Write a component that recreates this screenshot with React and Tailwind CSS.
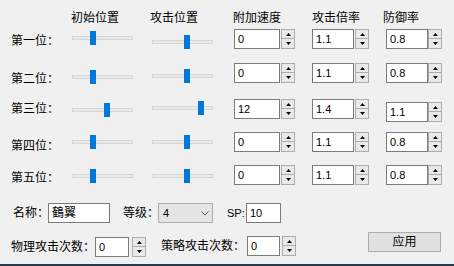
import React from 'react';

const rows = [
  { label: '第一位：', h: 'h-[34px]', lt: 'mt-[4px]', s1: 'mt-[2px]', s2: 'mt-[6px]', c3: 'mt-0', a: 18, b: 32, v: ['0', '1.1', '0.8'] },
  { label: '第二位：', h: 'h-[36px]', lt: 'mt-[8px]', s1: 'mt-[7px]', s2: 'mt-[6px]', c3: 'mt-0', a: 18, b: 32, v: ['0', '1.1', '0.8'] },
  { label: '第三位：', h: 'h-[33px]', lt: 'mt-[2px]', s1: 'mt-[4px]', s2: 'mt-[2px]', c3: 'mt-[3px]', a: 32, b: 46, v: ['12', '1.4', '1.1'] },
  { label: '第四位：', h: 'h-[33px]', lt: 'mt-[6px]', s1: 'mt-[3px]', s2: 'mt-[3px]', c3: 'mt-0', a: 18, b: 32, v: ['0', '1.1', '0.8'] },
  { label: '第五位：', h: 'h-[38px]', lt: 'mt-[5px]', s1: 'mt-[4px]', s2: 'mt-[4px]', c3: 'mt-0', a: 18, b: 32, v: ['0', '1.1', '0.8'] },
];

function Slider({ pos, className }) {
  return (
    <div className={`relative w-[61px] h-[14px] ${className}`}>
      <div className="mt-[5px] h-[4px] border border-[#d6d6d6] bg-[#e7eaea]" />
      <div className="absolute top-0 w-[6px] h-[14px] bg-[#0078d7]" style={{ left: pos }} />
    </div>
  );
}

function Arrows({ gap = 'ml-px' }) {
  return (
    <div className={`flex flex-col w-[14px] h-[20px] ${gap}`}>
      <div className="h-[10px] border border-[#adadad] bg-[#e9e9e9] flex items-center justify-center">
        <svg width="5" height="3" viewBox="0 0 5 3"><polygon points="2.5,0 5,3 0,3" fill="#000" /></svg>
      </div>
      <div className="h-[10px] border border-t-0 border-[#adadad] bg-[#e9e9e9] flex items-center justify-center">
        <svg width="5" height="3" viewBox="0 0 5 3"><polygon points="0,0 5,0 2.5,3" fill="#000" /></svg>
      </div>
    </div>
  );
}

function Spin({ value, w, gap, className = '' }) {
  return (
    <div className={`flex ${className}`}>
      <div className={`${w} h-[20px] bg-white border border-[#7a7a7a] pl-[3px] flex items-center text-[11px]`}>
        {value}
      </div>
      <Arrows gap={gap} />
    </div>
  );
}

const cols = 'grid grid-cols-[61px_80px_82px_78px_74px_68px] pl-[11px]';

export default function App() {
  return (
    <div className="w-[454px] h-[266px] bg-[#f0f0f0] flex flex-col text-[12px] leading-4 text-black whitespace-nowrap font-['Liberation_Sans','Noto_Sans_CJK_SC',sans-serif]">
      {/* Headers */}
      <div className={`${cols} h-[29px] pt-[10px]`}>
        <div />
        <div className="-ml-px">初始位置</div>
        <div className="-ml-[2px]">攻击位置</div>
        <div className="-ml-px">附加速度</div>
        <div>攻击倍率</div>
        <div className="-ml-[3px]">防御率</div>
      </div>

      {/* Position rows */}
      {rows.map((r) => (
        <div key={r.label} className={`${cols} ${r.h} items-start`}>
          <div className={r.lt}>{r.label}</div>
          <Slider pos={r.a} className={r.s1} />
          <Slider pos={r.b} className={r.s2} />
          <Spin value={r.v[0]} w="w-[46px]" />
          <Spin value={r.v[1]} w="w-[42px]" />
          <Spin value={r.v[2]} w="w-[42px]" gap="ml-0" className={r.c3} />
        </div>
      ))}

      {/* Name / level / SP */}
      <div className="flex items-center h-[20px] pl-[13px]">
        <span className="w-[35px] shrink-0">名称：</span>
        <div className="w-[62px] h-[20px] bg-white border border-[#7a7a7a] pl-[3px] flex items-center">鶴翼</div>
        <span className="ml-[13px] w-[35px] shrink-0">等级：</span>
        <div className="w-[55px] h-[20px] bg-[#e5e5e5] border border-[#adadad] pl-[4px] pr-[3px] flex items-center justify-between text-[11px]">
          <span>4</span>
          <svg width="8" height="5" viewBox="0 0 8 5" fill="none">
            <polyline points="0.5,0.5 4,4 7.5,0.5" stroke="#555" strokeWidth="1" />
          </svg>
        </div>
        <span className="ml-[14px] w-[19px] text-[11px]">SP:</span>
        <div className="w-[35px] h-[20px] bg-white border border-[#7a7a7a] pl-[3px] flex items-center text-[11px]">10</div>
      </div>

      {/* Attack counts + apply */}
      <div className="flex items-start mt-[9px] pl-[11px]">
        <div className="flex items-center mt-[5px]">
          <span className="w-[84px] shrink-0">物理攻击次数：</span>
          <Spin value="0" w="w-[34px]" gap="ml-[3px]" />
        </div>
        <div className="flex items-center mt-[4px] ml-[15px]">
          <span className="w-[86px] shrink-0">策略攻击次数：</span>
          <Spin value="0" w="w-[33px]" gap="ml-[2px]" />
        </div>
        <button className="ml-[72px] w-[73px] h-[20px] bg-[#e1e1e1] border border-[#adadad] flex items-center justify-center">
          应用
        </button>
      </div>

      <div className="mt-auto h-[2px] bg-[#263a4a]" />
    </div>
  );
}
